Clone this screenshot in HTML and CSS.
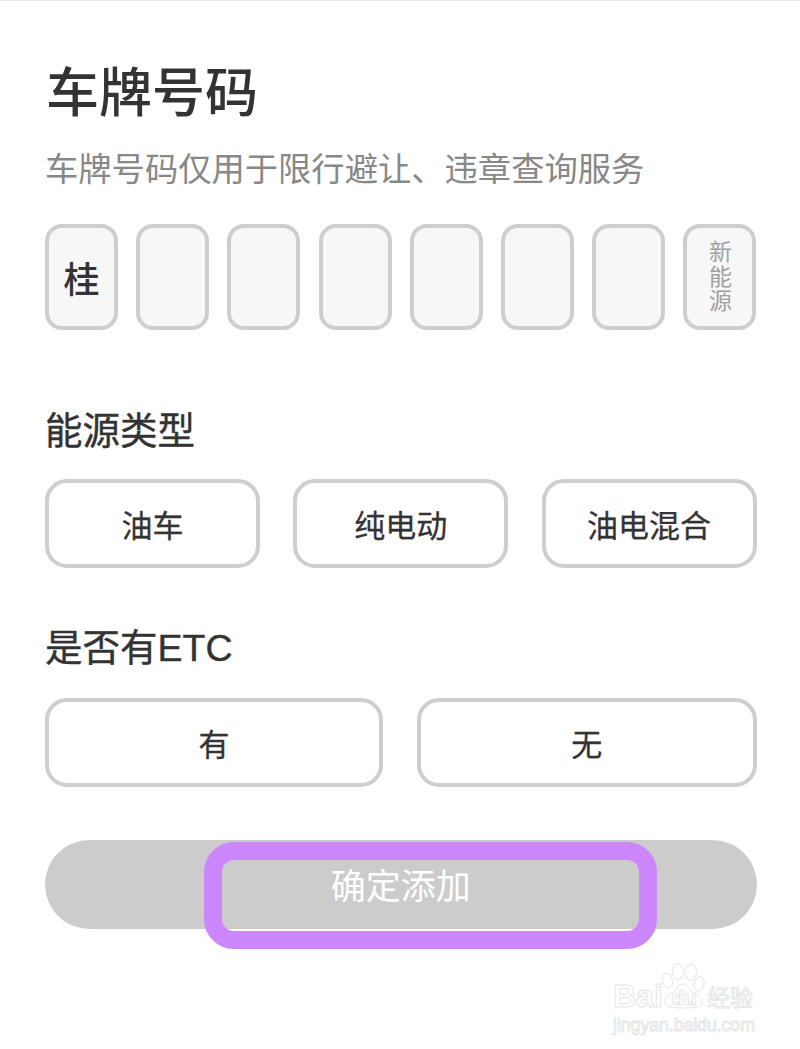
FILE: index.html
```html
<!DOCTYPE html>
<html lang="zh-CN">
<head>
    <meta charset="UTF-8">
    <meta name="viewport" content="width=device-width, initial-scale=1.0">
    <title>车牌号码</title>
    <link rel="stylesheet" href="styles.css">
</head>
<body>

    <div class="page">
        <h1 class="titre">车牌号码</h1>
        <p class="sous-titre">车牌号码仅用于限行避让、违章查询服务</p>

        <div class="plaque">
            <div class="case case-province">桂</div>
            <div class="case"></div>
            <div class="case"></div>
            <div class="case"></div>
            <div class="case"></div>
            <div class="case"></div>
            <div class="case"></div>
            <div class="case case-nouvelle"><span class="vertical">新能源</span></div>
        </div>

        <h2 class="section section-energie">能源类型</h2>
        <div class="options options-3">
            <button class="option">油车</button>
            <button class="option">纯电动</button>
            <button class="option">油电混合</button>
        </div>

        <h2 class="section section-etc">是否有ETC</h2>
        <div class="options options-2">
            <button class="option">有</button>
            <button class="option">无</button>
        </div>

        <div class="zone-valider">
            <button class="valider">确定添加</button>
            <div class="surlignage"></div>
        </div>
    </div>

    <div class="filigrane">
        <div class="filigrane-logo">
            <span class="filigrane-bai">Bai</span>
            <span class="filigrane-du">
                <svg class="patte" width="44" height="46" viewBox="0 0 44 46">
                    <ellipse cx="5.5" cy="17.5" rx="5" ry="7.5" transform="rotate(-15 5.5 17.5)"/>
                    <ellipse cx="16" cy="8.5" rx="5.5" ry="8" transform="rotate(-6 16 8.5)"/>
                    <ellipse cx="29" cy="9" rx="5.5" ry="8" transform="rotate(6 29 9)"/>
                    <ellipse cx="37" cy="21" rx="5" ry="7.5" transform="rotate(15 37 21)"/>
                    <path d="M21 21C26 21 27 28 32 30C38 32 41 36 40 40C39 45 32 45 21 45C10 45 3 44 3 39C3 34 8 32 12 29C15 27 16 21 21 21Z"/>
                </svg>
                <span class="filigrane-paume">du</span>
            </span>
            <span class="filigrane-jy">经验</span>
        </div>
        <div class="filigrane-url">jingyan.baidu.com</div>
    </div>

</body>
</html>
```

FILE: styles.css
```css
*{
    padding: 0;
    margin: 0;
    box-sizing: border-box;
}

html, body{
    height: 100%;
    overflow: hidden;
}

body{
    position: relative;
    background-color: white;
    border-top: 1px solid rgb(232, 232, 232);
    font-family: "Liberation Sans", "Noto Sans CJK SC", sans-serif;
    color: rgb(51, 51, 51);
}

.page{
    padding: 0 43.5px 0 45px;
}

.titre{
    margin-top: 58px;
    font-size: 53px;
    line-height: 70px;
    font-weight: 500;
    padding-left: 1px;
}

.sous-titre{
    margin-top: 19px;
    font-size: 33.3px;
    line-height: 44px;
    font-weight: 400;
    color: rgb(136, 136, 136);
    white-space: nowrap;
}

.plaque{
    margin-top: 32px;
    display: grid;
    grid-template-columns: repeat(8, 73px);
    justify-content: space-between;
}

.case{
    height: 106px;
    background-color: rgb(247, 247, 247);
    border: 4px solid rgb(206, 206, 206);
    border-radius: 17px;
    display: flex;
    justify-content: center;
    align-items: center;
    text-align: center;
}

.case-province{
    font-size: 36px;
    font-weight: 500;
}

.case-nouvelle{
    font-size: 23px;
    color: rgb(160, 160, 160);
}

.vertical{
    writing-mode: vertical-rl;
    text-orientation: upright;
    letter-spacing: 1.5px;
    padding-right: 3px;
}

.section{
    font-size: 37.5px;
    line-height: 50px;
    font-weight: 400;
    -webkit-text-stroke: 0.4px rgb(51, 51, 51);
    white-space: nowrap;
}

.section-energie{
    margin-top: 76px;
}

.section-etc{
    margin-top: 55.5px;
}

.options{
    display: grid;
    margin-top: 23px;
}

.options-3{
    grid-template-columns: repeat(3, 215px);
    justify-content: space-between;
}

.options-2{
    margin-top: 25px;
    grid-template-columns: 338px 339.5px;
    justify-content: space-between;
}

.option{
    height: 88.5px;
    background-color: white;
    border: 4px solid rgb(206, 206, 206);
    border-radius: 22px;
    font-family: inherit;
    font-size: 31px;
    -webkit-text-stroke: 0.3px rgb(51, 51, 51);
    color: rgb(51, 51, 51);
}

.zone-valider{
    position: relative;
    margin-top: 53.5px;
}

.valider{
    display: block;
    width: 100%;
    height: 89px;
    padding-bottom: 2px;
    border: none;
    border-radius: 45px;
    background-color: rgb(204, 204, 204);
    font-family: inherit;
    font-size: 35px;
    color: white;
}

.surlignage{
    position: absolute;
    left: 159px;
    top: 2px;
    width: 453px;
    height: 107px;
    border: 18px solid rgb(203, 135, 251);
    border-radius: 30px;
}

.filigrane{
    position: absolute;
    left: 613px;
    top: 962px;
    width: 148px;
    color: transparent;
    -webkit-text-stroke: 1px rgb(230, 230, 230);
}

.filigrane-logo{
    display: flex;
    align-items: flex-end;
    height: 48px;
}

.filigrane-bai{
    width: 49px;
    font-family: "Liberation Sans", sans-serif;
    font-size: 32px;
    line-height: 30px;
    font-weight: 700;
}

.filigrane-du{
    position: relative;
    width: 44px;
    height: 26px;
    text-align: center;
}

.patte{
    position: absolute;
    left: 0;
    top: -22px;
    fill: white;
    stroke: rgb(230, 230, 230);
    stroke-width: 1;
}

.filigrane-paume{
    position: relative;
    font-family: "Liberation Sans", sans-serif;
    font-size: 21px;
    line-height: 26px;
    font-weight: 700;
}

.filigrane-jy{
    margin-left: 1px;
    font-family: "Noto Sans CJK SC", sans-serif;
    font-size: 23px;
    line-height: 30px;
    white-space: nowrap;
}

.filigrane-url{
    margin-top: 4px;
    font-family: "Liberation Sans", sans-serif;
    font-size: 17.6px;
    line-height: 20px;
    white-space: nowrap;
}
```
